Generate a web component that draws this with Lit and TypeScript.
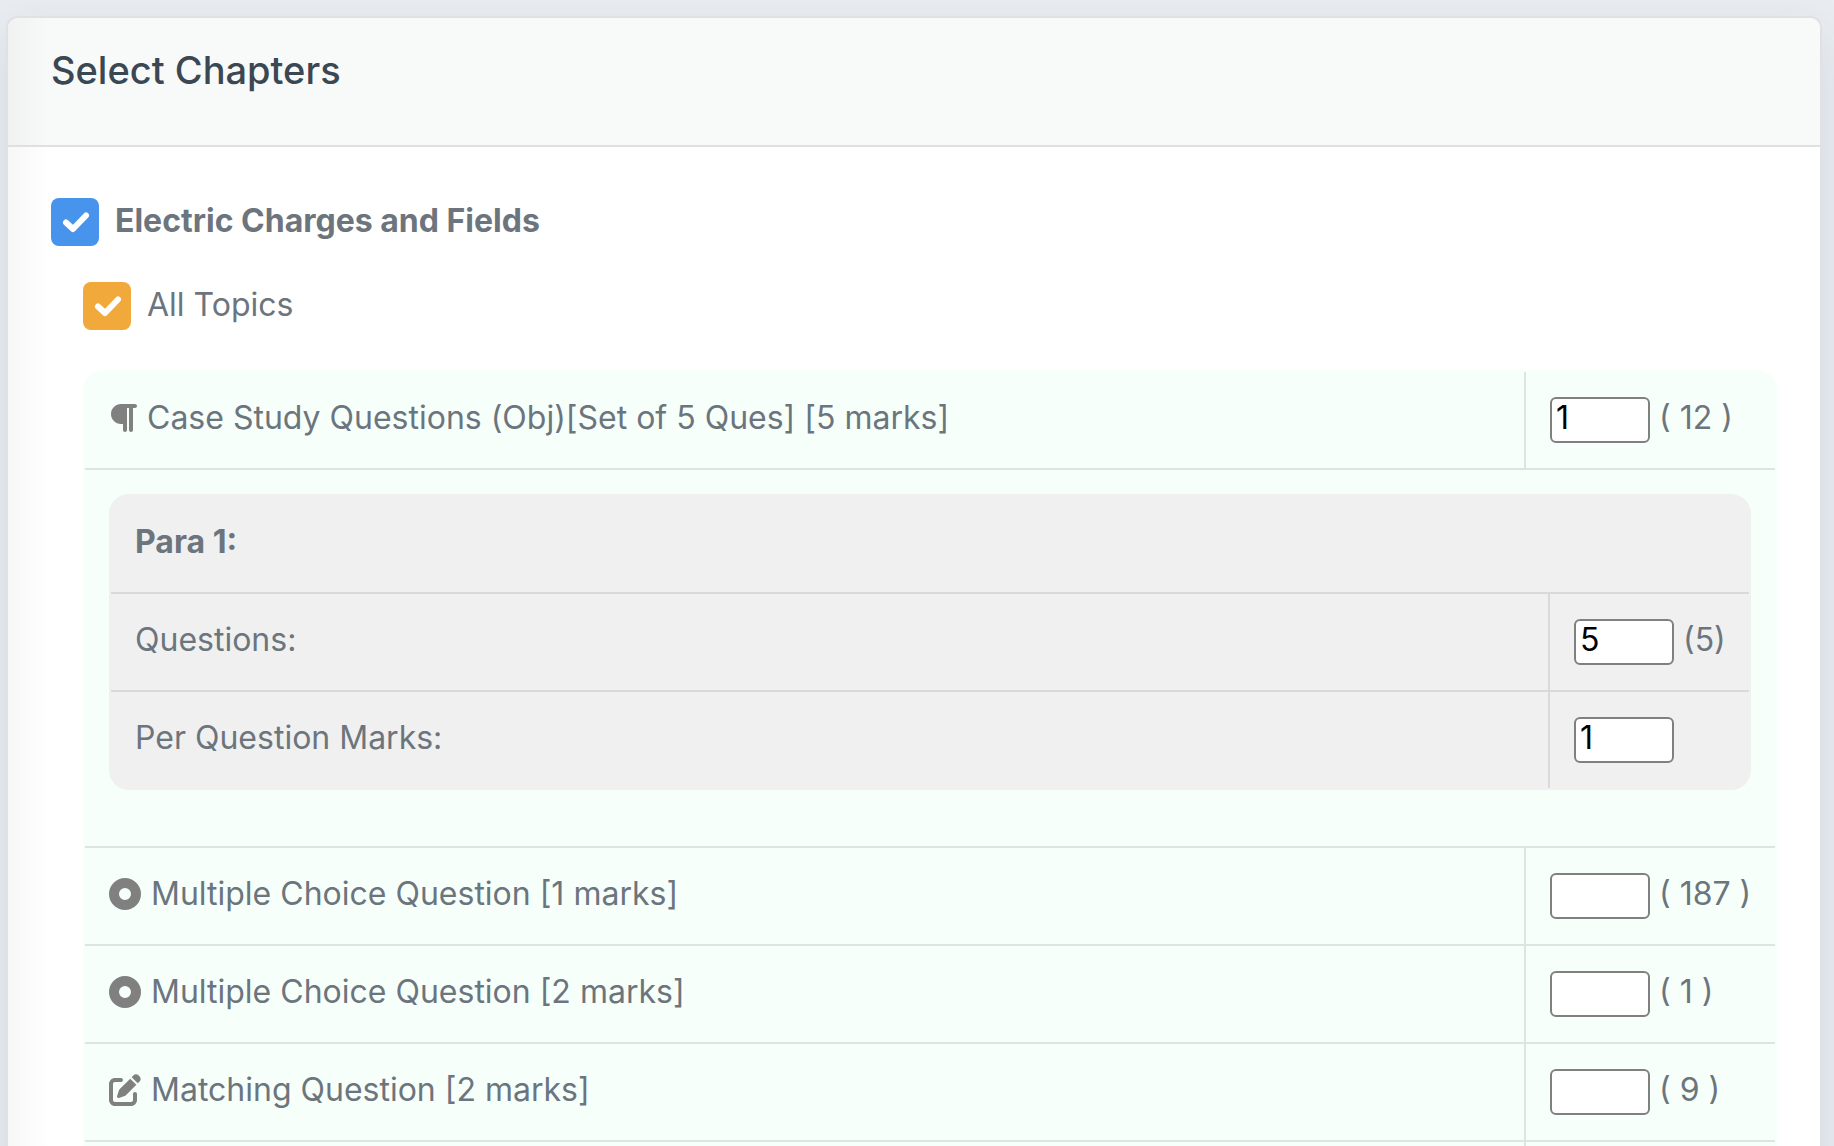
import { LitElement, html, css, svg, nothing } from "lit";
import { customElement, property } from "lit/decorators.js";

type IconName = "paragraph" | "dot" | "edit";

interface QuestionRow {
  id: string;
  icon: IconName;
  label: string;
  value: string;
  available: string;
}

const caseStudy: QuestionRow = {
  id: "case-study",
  icon: "paragraph",
  label: "Case Study Questions (Obj)[Set of 5 Ques] [5 marks]",
  value: "1",
  available: "( 12 )",
};

const questionRows: QuestionRow[] = [
  { id: "mcq-1", icon: "dot", label: "Multiple Choice Question [1 marks]", value: "", available: "( 187 )" },
  { id: "mcq-2", icon: "dot", label: "Multiple Choice Question [2 marks]", value: "", available: "( 1 )" },
  { id: "matching-2", icon: "edit", label: "Matching Question [2 marks]", value: "", available: "( 9 )" },
];

const icons = {
  paragraph: svg`<path d="M192 32h224c17.7 0 32 14.3 32 32s-14.3 32-32 32h-32v352c0 17.7-14.3 32-32 32s-32-14.3-32-32V96h-32v352c0 17.7-14.3 32-32 32s-32-14.3-32-32v-96h-32C103.600 352 32 280.400 32 192S103.600 32 192 32z"/>`,
  dot: svg`<path fill-rule="evenodd" d="M256 0a256 256 0 1 1 0 512a256 256 0 1 1 0-512zm0 160a96 96 0 1 0 0 192a96 96 0 1 0 0-192z"/>`,
  edit: svg`<path d="M471.600 21.700c-21.900-21.900-57.300-21.900-79.200 0L362.300 51.700l97.900 97.900 30.100-30.100c21.900-21.900 21.900-57.300 0-79.200L471.600 21.700zm-299.200 220c-6.100 6.100-10.800 13.600-13.500 21.900l-29.600 88.800c-2.900 8.600-.6 18.100 5.800 24.600s15.900 8.700 24.600 5.800l88.800-29.600c8.200-2.700 15.700-7.400 21.900-13.500L437.700 172.300 339.700 74.300 172.400 241.700zM96 64C43 64 0 107 0 160v256c0 53 43 96 96 96h256c53 0 96-43 96-96v-96c0-17.700-14.300-32-32-32s-32 14.300-32 32v96c0 17.700-14.300 32-32 32H96c-17.700 0-32-14.300-32-32V160c0-17.700 14.300-32 32-32h96c17.700 0 32-14.300 32-32s-14.300-32-32-32H96z"/>`,
};

@customElement("check-option")
export class CheckOption extends LitElement {
  @property() label = "";
  @property() tone = "blue";

  static styles = css`
    :host {
      display: block;
    }
    .option {
      display: flex;
      align-items: center;
      gap: 16px;
      width: fit-content;
      height: 48px;
      cursor: pointer;
    }
    .mark {
      display: grid;
      width: 48px;
      height: 48px;
    }
    .box,
    .tick {
      grid-area: 1 / 1;
      width: 48px;
      height: 48px;
      margin: 0;
    }
    .box {
      appearance: none;
      border: 2px solid #adb5bd;
      border-radius: 8px;
      background: #fff;
    }
    .box:checked {
      border: 0;
      background: #4894ed;
    }
    .box.orange:checked {
      background: #f1a93b;
    }
    .tick {
      fill: none;
      stroke: #fff;
      stroke-width: 6;
      stroke-linecap: round;
      stroke-linejoin: round;
      pointer-events: none;
    }
    .text {
      padding-bottom: 3px;
    }
    .text.blue {
      font-weight: 700;
    }
  `;

  render() {
    return html`
      <label class="option">
        <span class="mark">
          <input class="box ${this.tone}" type="checkbox" checked />
          <svg class="tick" viewBox="0 0 48 48" aria-hidden="true"><path d="M15 24.500L22 31L35 17.500" /></svg>
        </span>
        <span class="text ${this.tone}">${this.label}</span>
      </label>
    `;
  }
}

@customElement("app-root")
export class AppRoot extends LitElement {
  static styles = css`
    :host {
      display: block;
      box-sizing: border-box;
      height: 100vh;
      overflow: hidden;
      padding: 16px 12px 0 6px;
      background: #e9edf2;
      color: #6c757d;
      font-family: Inter, "Liberation Sans", sans-serif;
      font-size: 32px;
      line-height: 48px;
    }
    .card {
      border: 2px solid #dfe1e2;
      border-bottom: 0;
      border-radius: 12px 12px 0 0;
      background: #fff;
      box-shadow: 0 16px 48px rgba(40, 60, 70, 0.1);
    }
    .header,
    .body {
      background-image: linear-gradient(90deg, rgba(0, 0, 0, 0.03), transparent 44px);
    }
    .header {
      padding: 32px 43px 55px;
      border-bottom: 2px solid #dfe1e1;
      border-radius: 10px 10px 0 0;
      background-color: #f8faf9;
    }
    .title {
      margin: 0;
      color: #3b4752;
      font-size: 38px;
      font-weight: 500;
      line-height: 40px;
    }
    .body {
      display: flex;
      flex-direction: column;
      gap: 36px;
      padding: 51px 43px;
    }
    .topics {
      display: flex;
      flex-direction: column;
      gap: 40px;
      padding-left: 32px;
    }
    .panel {
      padding: 2px;
      border-radius: 20px;
      background: #f6fffa;
    }
    .panel.para {
      margin-bottom: 32px;
      background: #f0f0f0;
    }
    .grid {
      width: 100%;
      border-collapse: separate;
      border-spacing: 0;
      table-layout: fixed;
    }
    .count-col {
      width: 251px;
    }
    .para .count-col {
      width: 201px;
    }
    td,
    th {
      box-sizing: border-box;
      border-bottom: 2px solid #dce4e4;
      padding: 0;
      text-align: left;
      vertical-align: top;
      font-weight: 400;
    }
    .para td,
    .para th {
      border-color: #d8d9da;
    }
    .para tr:last-child > * {
      border-bottom: 0;
    }
    .name {
      padding: 22px 24px 26px;
    }
    .name.strong {
      font-weight: 700;
    }
    .nested {
      padding: 24px;
    }
    .count {
      border-left: 2px solid #dce4e4;
      padding: 25px 24px;
    }
    .entry,
    .caption {
      display: flex;
    }
    .entry {
      align-items: baseline;
      gap: 9px;
      height: 46px;
      line-height: 36px;
      white-space: nowrap;
    }
    .caption {
      align-items: center;
      gap: 10px;
    }
    .number {
      box-sizing: border-box;
      flex: none;
      width: 100px;
      height: 46px;
      border: 2px solid #808080;
      border-radius: 6px;
      padding: 0 4px 6px;
      background: #fff;
      color: #000;
      font: inherit;
      line-height: 36px;
    }
    .icon {
      flex: none;
      width: 32px;
      height: 32px;
      fill: #808080;
    }
    .icon.paragraph {
      width: 28px;
    }
  `;

  private entry(id: string, value: string, available = "") {
    return html`
      <td class="count">
        <div class="entry">
          <input class="number" id=${id} type="text" inputmode="numeric" .value=${value} />
          ${available ? html`<span>${available}</span>` : nothing}
        </div>
      </td>
    `;
  }

  private row(row: QuestionRow) {
    return html`
      <tr>
        <th class="name" scope="row">
          <label class="caption" for=${row.id}>
            <svg
              class="icon ${row.icon}"
              viewBox=${row.icon === "paragraph" ? "0 0 448 512" : "0 0 512 512"}
              aria-hidden="true"
            >${icons[row.icon]}</svg>
            <span>${row.label}</span>
          </label>
        </th>
        ${this.entry(row.id, row.value, row.available)}
      </tr>
    `;
  }

  render() {
    return html`
      <main class="card">
        <header class="header"><h1 class="title">Select Chapters</h1></header>
        <div class="body">
          <check-option label="Electric Charges and Fields" tone="blue"></check-option>
          <section class="topics">
            <check-option label="All Topics" tone="orange"></check-option>
            <div class="panel">
              <table class="grid">
                <colgroup><col /><col class="count-col" /></colgroup>
                <tbody>
                  ${this.row(caseStudy)}
                  <tr>
                    <td class="nested" colspan="2">
                      <div class="panel para">
                        <table class="grid">
                          <colgroup><col /><col class="count-col" /></colgroup>
                          <tbody>
                            <tr><th class="name strong" colspan="2">Para 1:</th></tr>
                            <tr>
                              <th class="name" scope="row"><label for="para-questions">Questions:</label></th>
                              ${this.entry("para-questions", "5", "(5)")}
                            </tr>
                            <tr>
                              <th class="name" scope="row"><label for="para-marks">Per Question Marks:</label></th>
                              ${this.entry("para-marks", "1")}
                            </tr>
                          </tbody>
                        </table>
                      </div>
                    </td>
                  </tr>
                  ${questionRows.map((row) => this.row(row))}
                  <tr><td class="name"></td><td class="count"></td></tr>
                </tbody>
              </table>
            </div>
          </section>
        </div>
      </main>
    `;
  }
}
